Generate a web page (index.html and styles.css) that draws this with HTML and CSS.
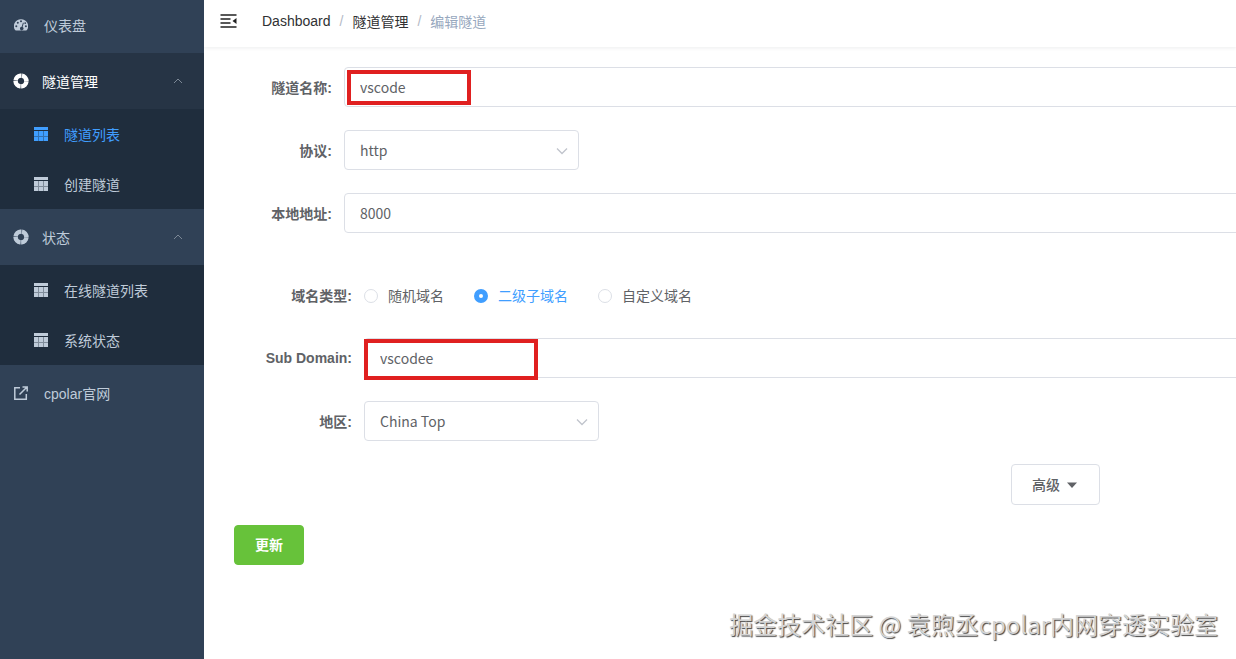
FILE: index.html
```html
<!DOCTYPE html>
<html lang="zh-CN">
<head>
    <meta charset="UTF-8">
    <meta name="viewport" content="width=device-width, initial-scale=1.0">
    <title>编辑隧道</title>
    <link rel="stylesheet" href="styles.css">
</head>
<body>

    <!-- shared icons -->
    <svg class="icon-defs" width="0" height="0">
        <symbol id="icon-table" viewBox="0 0 14 14">
            <path d="M0 0h14v3H0zM0 4h4v5H0zM5 4h4v5H5zM10 4h4v5h-4zM0 10h4v4H0zM5 10h4v4H5zM10 10h4v4h-4z"/>
            <path d="M0 4h14v10H0z" opacity="0.6"/>
        </symbol>
        <symbol id="icon-ring" viewBox="0 0 16 16">
            <circle cx="8" cy="8" r="5.4" fill="none" stroke="currentColor" stroke-width="4.4" stroke-dasharray="7.6 0.88" stroke-dashoffset="-0.44"/>
            <circle cx="8" cy="8" r="5.4" fill="none" stroke="currentColor" stroke-width="4.4" opacity="0.4"/>
        </symbol>
        <symbol id="icon-up" viewBox="0 0 10 6">
            <path d="M1 5l4-4 4 4" fill="none" stroke="currentColor"/>
        </symbol>
        <symbol id="icon-down" viewBox="0 0 12 8">
            <path d="M1 1.5l5 5 5-5" fill="none" stroke="currentColor" stroke-width="1.3"/>
        </symbol>
    </svg>

    <div class="app">
        <nav class="sidebar">
            <a class="menu-item first" href="#">
                <svg class="menu-icon" viewBox="0 0 14 14">
                    <path fill-rule="evenodd" d="M7 1.2a7 7 0 0 0-5.9 10.9c.2.3.4.4.7.4h10.4c.3 0 .5-.1.7-.4A7 7 0 0 0 7 1.2zM2.3 7.2a1 1 0 1 1 0 2 1 1 0 0 1 0-2zM3.8 3.8a1 1 0 1 1 0 2 1 1 0 0 1 0-2zM7 2.3a1 1 0 1 1 0 2 1 1 0 0 1 0-2zM9 4.6l.8.3-1.2 4a1.8 1.8 0 1 1-.9-.2zM11.2 4.2a.9.9 0 1 1 0 1.8.9.9 0 0 1 0-1.8zM11.9 7.2a1 1 0 1 1 0 2 1 1 0 0 1 0-2z"/>
                </svg>
                <span>仪表盘</span>
            </a>

            <a class="menu-item menu-title active" href="#">
                <svg class="ring-icon"><use href="#icon-ring"/></svg>
                <span>隧道管理</span>
                <svg class="arrow"><use href="#icon-up"/></svg>
            </a>
            <div class="submenu">
                <a class="submenu-item current" href="#"><svg class="menu-icon"><use href="#icon-table"/></svg><span>隧道列表</span></a>
                <a class="submenu-item" href="#"><svg class="menu-icon"><use href="#icon-table"/></svg><span>创建隧道</span></a>
            </div>

            <a class="menu-item menu-title" href="#">
                <svg class="ring-icon"><use href="#icon-ring"/></svg>
                <span>状态</span>
                <svg class="arrow"><use href="#icon-up"/></svg>
            </a>
            <div class="submenu">
                <a class="submenu-item" href="#"><svg class="menu-icon"><use href="#icon-table"/></svg><span>在线隧道列表</span></a>
                <a class="submenu-item" href="#"><svg class="menu-icon"><use href="#icon-table"/></svg><span>系统状态</span></a>
            </div>

            <a class="menu-item" href="#">
                <svg class="menu-icon" viewBox="0 0 14 14">
                    <path d="M6 1.7H.8v11.5h11.5V8M5.5 8.5l7-7M8.5.9h4.7v4.7" fill="none" stroke="currentColor" stroke-width="1.5"/>
                </svg>
                <span>cpolar官网</span>
            </a>
        </nav>

        <main class="main">
            <header class="navbar">
                <button class="hamburger" type="button" aria-label="收起菜单">
                    <svg viewBox="0 0 16 14">
                        <path d="M0 1h16M0 5h10M0 9h10M0 13h16" fill="none" stroke="currentColor" stroke-width="1.6"/>
                        <path d="M16 4v6l-4-3z"/>
                    </svg>
                </button>
                <a href="#">Dashboard</a>
                <span class="separator">/</span>
                <a href="#">隧道管理</a>
                <span class="separator">/</span>
                <span class="here">编辑隧道</span>
            </header>

            <form class="form">
                <div class="form-row">
                    <label for="tunnelName">隧道名称:</label>
                    <div class="field wide">
                        <input type="text" id="tunnelName" value="vscode">
                        <span class="mark mark-name"></span>
                    </div>
                </div>
                <div class="form-row">
                    <label for="protocol">协议:</label>
                    <div class="field">
                        <select id="protocol"><option>http</option></select>
                        <svg class="caret"><use href="#icon-down"/></svg>
                    </div>
                </div>
                <div class="form-row">
                    <label for="localAddr">本地地址:</label>
                    <div class="field wide">
                        <input type="text" id="localAddr" value="8000">
                    </div>
                </div>

                <div class="http-options">
                    <div class="form-row" role="radiogroup" aria-labelledby="domainType">
                        <span class="form-label" id="domainType">域名类型:</span>
                        <div class="radios">
                            <label><input type="radio" name="domain">随机域名</label>
                            <label><input type="radio" name="domain" checked>二级子域名</label>
                            <label><input type="radio" name="domain">自定义域名</label>
                        </div>
                    </div>
                    <div class="form-row">
                        <label for="subDomain">Sub Domain:</label>
                        <div class="field wide">
                            <input type="text" id="subDomain" value="vscodee">
                            <span class="mark mark-domain"></span>
                        </div>
                    </div>
                    <div class="form-row">
                        <label for="region">地区:</label>
                        <div class="field">
                            <select id="region"><option>China Top</option></select>
                            <svg class="caret"><use href="#icon-down"/></svg>
                        </div>
                    </div>
                </div>

                <div class="more">
                    <button class="btn" type="button">高级<svg viewBox="0 0 10 6"><path d="M0 0.5h10L5 6z"/></svg></button>
                </div>
                <button class="btn btn-success" type="button">更新</button>
            </form>
        </main>
    </div>

    <div class="watermark">掘金技术社区 @ 袁煦丞cpolar内网穿透实验室</div>

</body>
</html>
```
FILE: styles.css
```css
* {
    box-sizing: border-box;
}

body {
    margin: 0;
    font-family: "Liberation Sans", "Noto Sans CJK SC", sans-serif;
    font-size: 14px;
    color: #606266;
    background: #fff;
}

a {
    color: inherit;
    text-decoration: none;
}

svg {
    fill: currentColor;
    flex: none;
}

.icon-defs {
    position: absolute;
}

.app {
    display: flex;
    min-height: 100vh;
}

/* sidebar */
.sidebar {
    width: 204px;
    flex: none;
    background: #304156;
    color: #bfcbd9;
}

.menu-item {
    display: flex;
    align-items: center;
    height: 56px;
    padding: 0 20px 0 14px;
}

.menu-item.first {
    height: 53px;
    padding-bottom: 3px;
}

.menu-title {
    padding-left: 13px;
}

.menu-title.active {
    background: #263445;
    color: #fff;
}

.menu-icon {
    width: 14px;
    height: 14px;
    margin-right: 16px;
}

.ring-icon {
    width: 16px;
    height: 16px;
    margin-right: 13px;
}

.arrow {
    width: 12px;
    height: 6px;
    margin-left: auto;
    color: #7c8896;
}

.submenu {
    background: #1f2d3d;
}

.submenu-item {
    display: flex;
    align-items: center;
    height: 50px;
    padding-left: 34px;
}

.submenu-item.current {
    color: #409eff;
}

/* top bar */
.main {
    flex: 1;
    min-width: 0;
    overflow: hidden;
}

.navbar {
    display: flex;
    align-items: center;
    height: 47px;
    padding: 0 16px 5px;
    color: #303133;
    box-shadow: 0 1px 4px rgba(0, 21, 41, 0.08);
}

.hamburger {
    display: flex;
    margin-right: 25px;
    padding: 0;
    border: none;
    background: none;
    color: #222;
    cursor: pointer;
}

.hamburger svg {
    width: 17px;
    height: 14px;
}

.separator {
    margin: 0 9px;
    color: #b4bac6;
}

.here {
    color: #97a8be;
}

/* form */
.form {
    padding: 20px 0 20px 30px;
}

.form-row {
    display: flex;
    align-items: center;
    height: 40px;
    margin-bottom: 23px;
}

.form-row > label,
.form-label {
    width: 110px;
    flex: none;
    padding: 0 12px 1px 0;
    text-align: right;
    font-weight: bold;
}

.field {
    position: relative;
    width: 235px;
}

/* text boxes run off the right side of the panel */
.field.wide {
    flex: 1;
    margin-right: -20px;
}

.field input,
.field select {
    display: block;
    width: 100%;
    height: 40px;
    padding: 0 15px;
    border: 1px solid #dcdfe6;
    border-radius: 4px;
    background: #fff;
    color: #606266;
    font-family: "Noto Sans CJK SC", sans-serif;
    font-size: 14px;
    appearance: none;
    outline: none;
}

.caret {
    position: absolute;
    top: 17px;
    right: 11px;
    width: 12px;
    height: 8px;
    color: #c0c4cc;
    pointer-events: none;
}

.mark {
    position: absolute;
    border: 4px solid #e02020;
    pointer-events: none;
}

.mark-name {
    top: 3px;
    left: 3px;
    width: 124px;
    height: 35px;
}

.mark-domain {
    top: 1px;
    left: 0;
    width: 174px;
    height: 41px;
}

.http-options {
    margin-top: 42px;
}

.http-options .form-row > label,
.http-options .form-label {
    width: 130px;
}

.radios {
    display: flex;
    gap: 30px;
}

.radios label {
    display: flex;
    align-items: center;
}

.radios input {
    width: 14px;
    height: 14px;
    margin: 2px 10px 0 0;
    border: 1px solid #dcdfe6;
    border-radius: 50%;
    appearance: none;
}

.radios input:checked {
    border: 5px solid #409eff;
}

.radios label:has(:checked) {
    color: #409eff;
}

.more {
    display: flex;
    justify-content: flex-end;
    margin: 0 136px 20px 0;
}

.btn {
    display: flex;
    align-items: center;
    height: 41px;
    padding: 0 20px 2px;
    border: 1px solid #dcdfe6;
    border-radius: 4px;
    background: #fff;
    color: #606266;
    font-family: inherit;
    font-size: 14px;
    font-weight: 500;
    cursor: pointer;
}

.btn svg {
    width: 10px;
    height: 6px;
    margin: 2px 2px 0 7px;
}

.btn-success {
    height: 40px;
    border-color: #67c23a;
    background: #67c23a;
    color: #fff;
    font-weight: bold;
}

.watermark {
    position: absolute;
    right: 18px;
    bottom: 17px;
    font-family: "Noto Sans CJK SC", sans-serif;
    font-size: 24px;
    line-height: 36px;
    color: #d4d4d4;
    text-shadow: 1px 1px 1px #444;
}
```
